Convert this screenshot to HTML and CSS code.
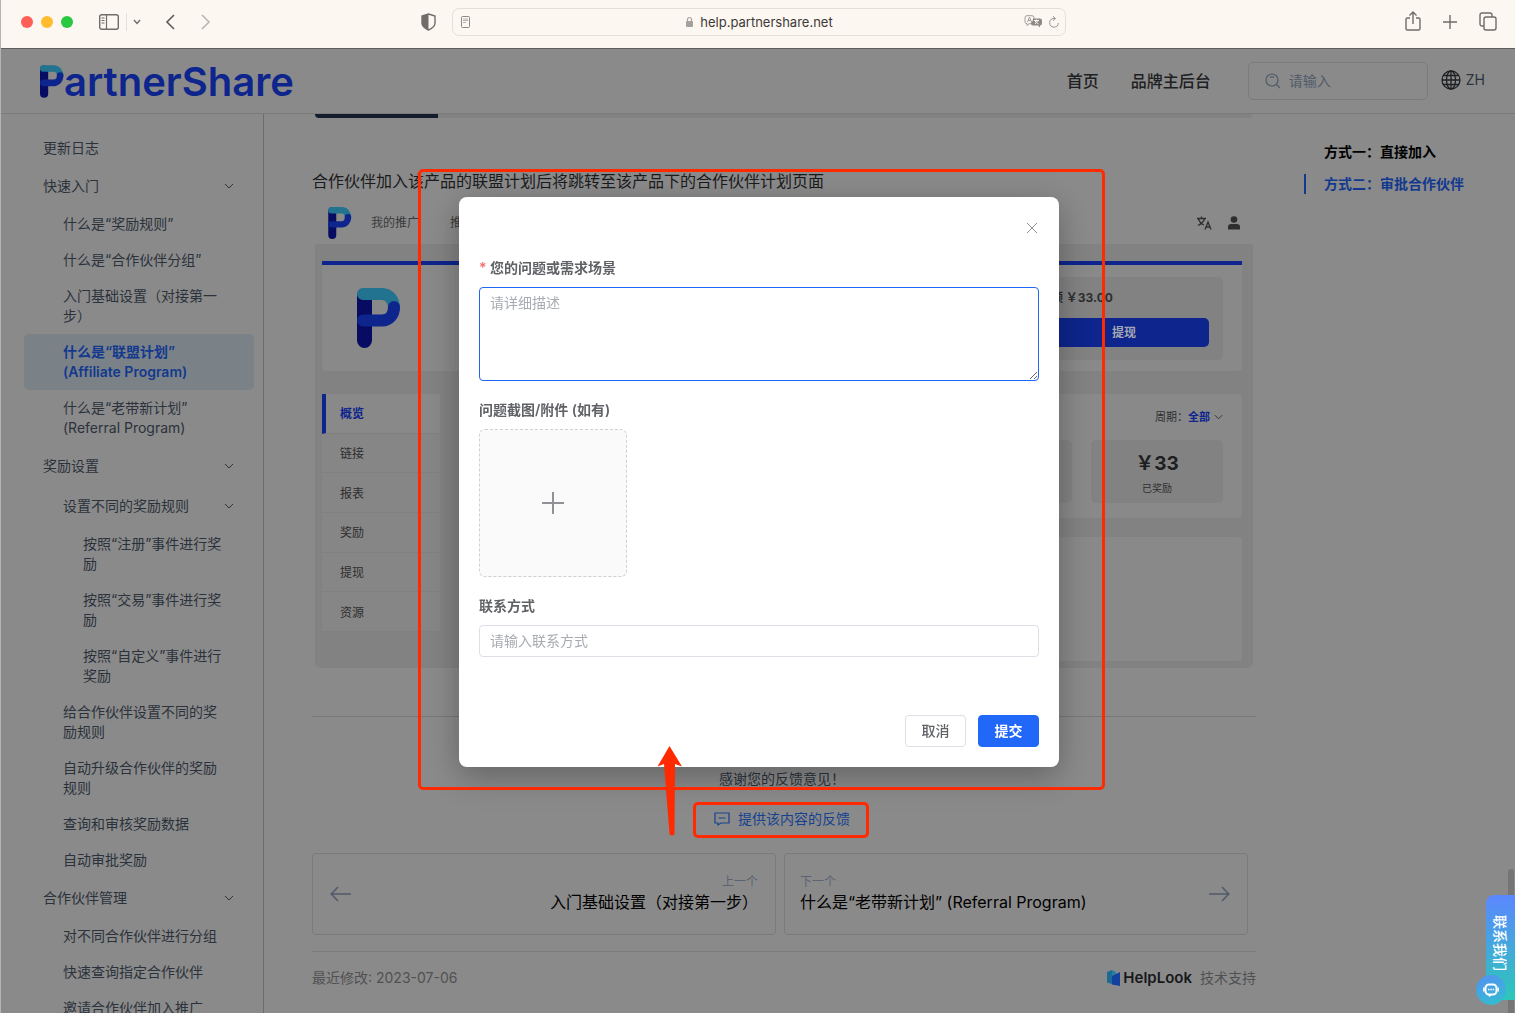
FILE: index.html
```html
<!DOCTYPE html>
<html lang="zh-CN">
<head>
<meta charset="utf-8">
<title>PartnerShare 帮助中心</title>
<link rel="stylesheet" href="styles.css">
</head>
<body>
<svg class="defs" aria-hidden="true">
  <symbol id="p-mark" viewBox="0 0 44 60">
    <path d="M7.500 8V52.500" stroke="#070b62" stroke-width="15" stroke-linecap="round" fill="none"/>
    <path d="M6 6H25C32 6 37 12 37 20" stroke="#22738f" stroke-width="12" stroke-linecap="round" fill="none"/>
    <path d="M6 32.500H25C32 32.500 37 27 37 19" stroke="#0d258c" stroke-width="12" stroke-linecap="round" fill="none"/>
  </symbol>
  <symbol id="chev" viewBox="0 0 10 6"><path d="M1 1l4 4 4-4" fill="none" stroke="currentColor"/></symbol>
</svg>
<div class="window">
  <div class="toolbar">
    <div class="tools tools-left">
      <span class="dots"><i class="dot red"></i><i class="dot amber"></i><i class="dot green"></i></span>
      <svg class="ic-side" width="20" height="16" viewBox="0 0 20 16" fill="none" stroke="#706c68" stroke-width="1.400"><rect x=".7" y=".7" width="18.600" height="14.600" rx="2"/><path d="M7.500 1v14M2.500 4h3M2.500 6.500h3M2.500 9h3" stroke-width="1.200"/></svg>
      <i class="sep"></i>
      <svg width="8" height="6" viewBox="0 0 8 6" fill="none" stroke="#706c68" stroke-width="1.400"><path d="M1 1l3 3.500L7 1"/></svg>
      <svg class="ic-back" width="10" height="16" viewBox="0 0 10 16" fill="none" stroke="#5f5b58" stroke-width="1.600"><path d="M9 1L2 8l7 7"/></svg>
      <svg class="ic-fwd" width="10" height="16" viewBox="0 0 10 16" fill="none" stroke="#b9b5b1" stroke-width="1.600"><path d="M1 1l7 7-7 7"/></svg>
      <svg class="ic-shield" width="15" height="18" viewBox="0 0 15 18"><path d="M7.500 1L14 3v7c0 3-3 5.500-6.500 7C4 15.500 1 13 1 10V3z" fill="none" stroke="#706c68" stroke-width="1.400"/><path d="M7.500 1v16C4 15.500 1 13 1 10V3z" fill="#706c68"/></svg>
    </div>
    <div class="address">
      <svg width="9" height="12" viewBox="0 0 9 12" fill="none" stroke="#8d8985"><rect x=".5" y=".5" width="8" height="11" rx="1"/><path d="M2 3h5M2 4.500h5M2 6.500h3" stroke="#b5b1ad"/></svg>
      <span class="host"><svg width="8" height="10" viewBox="0 0 8 10"><rect x="1" y="4" width="7" height="6" rx="1" fill="#a5a19e"/><path d="M2.500 4V2.500a2 2 0 014 0V4" fill="none" stroke="#a5a19e" stroke-width="1.200"/></svg>help.partnershare.net</span>
      <span class="addr-end">
        <svg width="19" height="13" viewBox="0 0 19 13"><path d="M3 .7h5a2 2 0 012 2v4a2 2 0 01-2 2H5L3 10.500V8.700a2 2 0 01-2-2v-4a2 2 0 012-2z" fill="none" stroke="#a09c98"/><path d="M3.500 7l2-5 2 5M4.200 5.500h2.600" stroke="#a09c98" fill="none"/><path d="M9 3.500h7a2 2 0 012 2v3a2 2 0 01-2 2v2l-2-2H9a2 2 0 01-2-2v-1a4 4 0 002-4z" fill="#8d8985"/><path d="M10 5.500h5M12.500 4.500v1M11 9l3-3.500M11 6l3.500 3" stroke="#fdf7f2" fill="none"/></svg>
        <svg width="10" height="12" viewBox="0 0 10 12" fill="none" stroke="#9a9692"><path d="M6 2.500H5A4.300 4.300 0 109.300 7M4 .3l2.500 2.200L4 4.700"/></svg>
      </span>
    </div>
    <div class="tools tools-right">
      <svg width="16" height="21" viewBox="0 0 16 21" fill="none" stroke="#706c68" stroke-width="1.400"><path d="M5 7H2.500A1.500 1.500 0 001 8.500v9A1.500 1.500 0 002.500 19h11a1.500 1.500 0 001.500-1.500v-9A1.500 1.500 0 0013.500 7H11M8 13V1.500M4.500 4.500L8 1l3.500 3.500"/></svg>
      <svg width="14" height="14" viewBox="0 0 14 14" stroke="#706c68" stroke-width="1.400"><path d="M7 0v14M0 7h14"/></svg>
      <svg width="18" height="19" viewBox="0 0 18 19" fill="none" stroke="#706c68" stroke-width="1.400"><rect x="5" y="5" width="12" height="13" rx="2"/><path d="M5 14H3a2 2 0 01-2-2V3a2 2 0 012-2h8a2 2 0 012 2v2"/></svg>
    </div>
  </div>

  <header class="site-head">
    <a class="brand" href="#"><svg width="24" height="33"><use href="#p-mark"/></svg><span>artnerShare</span></a>
    <nav class="top-nav"><a href="#">首页</a><a href="#">品牌主后台</a></nav>
    <label class="search">
      <svg width="16" height="16" viewBox="0 0 16 16" fill="none" stroke="#515b69" stroke-width="1.200"><circle cx="7" cy="7" r="6"/><path d="M11.500 11.500L15 15M5 4.500a3.500 3.500 0 014 0"/></svg>
      <input type="search" placeholder="请输入" aria-label="搜索">
    </label>
    <button class="lang" type="button"><svg width="20" height="20" viewBox="0 0 20 20" fill="none" stroke="#1e2022" stroke-width="1.300"><circle cx="10" cy="10" r="9"/><ellipse cx="10" cy="10" rx="4.500" ry="9"/><path d="M10 1v18M1 10h18M2.500 5.500h15M2.500 14.500h15"/></svg>ZH</button>
  </header>

  <div class="page">
    <nav class="side">
      <a href="#">更新日志</a>
      <a class="group" href="#">快速入门<svg class="chev"><use href="#chev"/></svg></a>
      <a class="l2" href="#">什么是“奖励规则”</a>
      <a class="l2" href="#">什么是“合作伙伴分组”</a>
      <a class="l2" href="#">入门基础设置（对接第一步）</a>
      <a class="l2 active" href="#">什么是“联盟计划” (Affiliate Program)</a>
      <a class="l2" href="#">什么是“老带新计划” (Referral Program)</a>
      <a class="group" href="#">奖励设置<svg class="chev"><use href="#chev"/></svg></a>
      <a class="l2 group" href="#">设置不同的奖励规则<svg class="chev"><use href="#chev"/></svg></a>
      <a class="l3" href="#">按照“注册”事件进行奖励</a>
      <a class="l3" href="#">按照“交易”事件进行奖励</a>
      <a class="l3" href="#">按照“自定义”事件进行奖励</a>
      <a class="l2" href="#">给合作伙伴设置不同的奖励规则</a>
      <a class="l2" href="#">自动升级合作伙伴的奖励规则</a>
      <a class="l2" href="#">查询和审核奖励数据</a>
      <a class="l2" href="#">自动审批奖励</a>
      <a class="group" href="#">合作伙伴管理<svg class="chev"><use href="#chev"/></svg></a>
      <a class="l2" href="#">对不同合作伙伴进行分组</a>
      <a class="l2" href="#">快速查询指定合作伙伴</a>
      <a class="l2" href="#">邀请合作伙伴加入推广</a>
    </nav>

    <main class="article">
      <div class="prev-shot"><i></i></div>
      <p class="lead">合作伙伴加入该产品的联盟计划后将跳转至该产品下的合作伙伴计划页面</p>

      <div class="shot">
        <div class="shot-head">
          <svg width="24" height="32"><use href="#p-mark"/></svg>
          <span>我的推广</span><span>推广</span>
          <svg class="shot-lang" width="15" height="14" viewBox="0 0 15 14" fill="none" stroke="#2d2e30" stroke-width="1.300"><path d="M0 2.500h9M4.500.5v2M1.500 3c1 3 3 5 5.500 6M7.500 3c-1 3-3.500 5-6.500 6.500M8 13.500l3-7.500 3 7.500M9 11h4"/></svg>
          <svg width="12" height="14" viewBox="0 0 12 14" fill="#2d2e30"><circle cx="6" cy="3.500" r="3.300"/><path d="M0 13.500V11a3 3 0 013-3h6a3 3 0 013 3v2.500z"/></svg>
        </div>
        <div class="shot-body">
          <div class="hero">
            <svg width="44" height="60"><use href="#p-mark"/></svg>
            <div class="balance"><b>余额 ￥33.00</b><span class="withdraw">提现</span></div>
          </div>
          <div class="cols">
            <ul class="menu"><li class="on">概览</li><li>链接</li><li>报表</li><li>奖励</li><li>提现</li><li>资源</li></ul>
            <div class="panels">
              <div class="panel stats">
                <div class="period">周期：<b>全部</b><svg width="9" height="6"><use href="#chev"/></svg></div>
                <div class="tiles"><div class="tile"></div><div class="tile"><b>￥33</b><small>已奖励</small></div></div>
              </div>
              <div class="panel blank"></div>
            </div>
          </div>
        </div>
      </div>

      <section class="feedback">
        <p>感谢您的反馈意见！</p>
        <a href="#"><svg width="16" height="14" viewBox="0 0 16 14" fill="none" stroke="#15428f" stroke-width="1.200"><path d="M1 1h14v10H7l-3 2v-2H1zM4.500 6h7"/></svg>提供该内容的反馈</a>
      </section>

      <div class="pager">
        <a class="prev" href="#"><svg width="21" height="16" viewBox="0 0 21 16" fill="none" stroke="#515b69" stroke-width="1.600"><path d="M21 8H1.500M8 1L1.200 8 8 15"/></svg><span class="pager-text"><small>上一个</small><b>入门基础设置（对接第一步）</b></span></a>
        <a class="next" href="#"><span class="pager-text"><small>下一个</small><b>什么是“老带新计划” (Referral Program)</b></span><svg width="21" height="16" viewBox="0 0 21 16" fill="none" stroke="#515b69" stroke-width="1.600"><path d="M0 8h19.500M13 1l6.800 7-6.800 7"/></svg></a>
      </div>

      <footer class="foot">
        <span>最近修改: 2023-07-06</span>
        <span class="credit"><svg width="13" height="18" viewBox="0 0 13 18"><path d="M0 3l5-2v14l-5-1.500z" fill="#1d6a94"/><path d="M5 1l4 2v7H5z" fill="#28809c"/><path d="M5 7l8-4v14l-8-1.500z" fill="#1440a0"/></svg><b>HelpLook</b>技术支持</span>
      </footer>
    </main>

    <nav class="toc"><a href="#">方式一：直接加入</a><a class="here" href="#">方式二：审批合作伙伴</a></nav>
  </div>
</div>

<i class="scroll"></i>

<div class="overlay">
  <form class="modal" role="dialog" aria-label="反馈">
    <button class="close" type="button" aria-label="关闭"><svg width="10" height="10" viewBox="0 0 10 10" stroke="#8c8f94"><path d="M0 0l10 10M10 0L0 10"/></svg></button>
    <div class="field"><label for="q"><em>*</em> 您的问题或需求场景</label><textarea id="q" placeholder="请详细描述"></textarea></div>
    <div class="field"><label for="up">问题截图/附件 (如有)</label><button class="upload" id="up" type="button"><svg width="22" height="22" viewBox="0 0 22 22" stroke="#8f9197" stroke-width="2"><path d="M11 0v22M0 11h22"/></svg></button></div>
    <div class="field"><label for="ct">联系方式</label><input id="ct" type="text" placeholder="请输入联系方式"></div>
    <div class="actions"><button type="button">取消</button><button class="primary" type="submit">提交</button></div>
  </form>
</div>

<i class="mark mark-dialog"></i>
<i class="mark mark-link"></i>
<svg class="arrow" width="26" height="90" viewBox="0 0 26 90"><path d="M12.500 0L25 20.500l-7-2.500-.5 70q-2.500 3-5 0L7 18l-6.500 2.500z" fill="#ff2a00"/></svg>

<button class="contact" type="button">联系我们</button>
<span class="bubble"><svg width="16" height="14" viewBox="0 0 16 14"><rect x="2.500" y="1.500" width="11" height="10" rx="3.500" fill="none" stroke="#fff" stroke-width="2"/><path d="M.8 4.500v4M15.200 4.500v4" stroke="#fff" stroke-width="1.500"/><path d="M5 12l1.500 2L8.500 12z" fill="#fff"/><path d="M5 6.500h1.500M7.300 6.500h1.500M9.600 6.500h1.500" stroke="#fff" stroke-width="1.500"/></svg></span>
</body>
</html>
```
FILE: styles.css
```css
*{box-sizing:border-box}
body{margin:0;height:100vh;overflow:hidden;background:#8a8a8a;font:14px/20px Inter,"Noto Sans CJK SC",sans-serif;color:#2b323b}
a{color:inherit;text-decoration:none}
button,input,textarea{font:inherit;color:inherit}
p,ul{margin:0;padding:0;list-style:none}
svg{flex:none;display:block;overflow:visible}
.defs{position:absolute;width:0;height:0}
.window{display:flex;flex-direction:column;height:100vh;border-left:1px solid #b4b4b6}

/* browser toolbar */
.toolbar{display:grid;grid-template-columns:1fr 614px 1fr;align-items:center;height:49px;flex:none;padding:0 0 5px 2px;background:#fdf7f2;border-bottom:1px solid #5e5f5c}
.tools{display:flex;align-items:center}
.tools-left{padding-left:18px}
.dots{display:flex;gap:8px;margin-right:26px}
.dot{width:12px;height:12px;border-radius:50%}
.red{background:#fe5f57}
.amber{background:#febc2e}
.green{background:#28c840}
.sep{width:1px;height:18px;background:#e6e0db;margin:0 6px 0 7px}
.ic-back{margin-left:24px}
.ic-fwd{margin-left:26px}
.ic-shield{margin:0 16px 0 auto}
.tools-right{justify-content:flex-end;gap:22px;padding-right:18px}
.address{display:flex;align-items:center;justify-content:space-between;height:28px;border:1px solid #e5dfda;border-radius:7px;padding:0 6px 0 8px;color:#3c3a38;font-size:13px}
.host{display:flex;align-items:center;gap:7px;margin-left:24px}
.addr-end{display:flex;align-items:center;gap:6px}

/* site header */
.site-head{display:flex;align-items:center;height:65px;flex:none;padding:0 30px 0 39px;border-bottom:1px solid #7b7b7b}
.brand{display:flex;align-items:center;margin-right:auto;color:#0d258c}
.brand span{font-size:40px;line-height:40px;font-weight:600;padding-top:2px}
.top-nav{display:flex;gap:32px;font-size:16px;font-weight:500;color:#1e2022}
.search{display:flex;align-items:center;gap:8px;width:180px;height:38px;margin:0 13px 0 37px;padding:0 16px;border:1px solid #7c7c7d;border-radius:5px}
.search input{width:100px;border:0;padding:0;background:none;outline:0}
.search input::placeholder{color:#515b69}
.lang{display:flex;align-items:center;gap:5px;border:0;background:none;padding:0 0 2px}

/* three columns */
.page{display:grid;grid-template-columns:263px minmax(0,1fr) 211px;flex:1;min-height:0;overflow:hidden}
.side{display:flex;flex-direction:column;min-height:0;padding:16px 9px 0 23px;border-right:1px solid #6b6b75;overflow:hidden}
.side a{flex:none;padding:8px 30px 8px 19px;border-radius:5px}
.side .group{display:flex;align-items:center;justify-content:space-between;height:40px;padding-right:20px}
.side .l2{padding-left:39px}
.side .l3{padding-left:59px}
.side .active{background:#7b8287;color:#12398e;font-weight:600}
.chev{width:10px;height:6px}
.article{padding:0 48px 0 48px;min-width:0}
.prev-shot{height:4px;margin:0 3px;background:#828282;border-radius:0 0 5px 5px;overflow:hidden}
.prev-shot i{display:block;width:123px;height:4px;background:#131d2c}
.lead{margin-top:51px;font-size:16px;line-height:24px;color:#1a1b1d}
.toc{padding-top:28px;font-weight:600;color:#000}
.toc a{display:block;line-height:20px;padding-left:18px;border-left:2px solid transparent;margin-bottom:12px}
.toc .here{color:#12398e;border-color:#12398e}

/* product screenshot inside the article */
.shot{margin:7px 3px 0;color:#2d2e30;font-size:12px}
.shot-head{display:flex;align-items:center;height:44px;padding:2px 13px 0;color:#393a3b}
.shot-head span{margin-left:19px}
.shot-head span + span{margin-left:31px}
.shot-lang{margin:0 16px 0 auto}
.shot-body{padding:17px 11px 7px 7px;background:#828282;border-radius:0 0 6px 6px}
.hero{display:flex;justify-content:space-between;align-items:center;height:110px;padding:0 19px 0 35px;background:#898989;border-top:4px solid #0d258c;border-radius:0 0 4px 4px}
.balance{width:220px;height:83px;padding:11px 14px 12px;background:#828282;border-radius:5px;text-align:center}
.balance b{display:block;line-height:20px;padding-right:74px}
.withdraw{display:block;width:170px;margin:10px 0 0 auto;line-height:29px;background:#0d258c;border-radius:5px;color:#a5a9b4;font-weight:700}
.cols{display:flex;gap:19px;margin-top:23px}
.menu{display:flex;flex-direction:column;width:118px;height:238px}
.menu li{display:flex;align-items:center;flex:1;padding:2px 0 0 18px;background:#868686;border-bottom:1px solid #808080}
.menu .on{background:#898989;color:#0d258c;font-weight:700;border-left:4px solid #0d258c;padding-left:14px}
.panels{flex:1;display:flex;flex-direction:column;gap:19px}
.panel{background:#898989;border-radius:4px;height:124px}
.period{display:flex;justify-content:flex-end;align-items:center;height:46px;padding-right:19px;font-size:11px}
.period b{color:#0d258c;margin-right:4px}
.tiles{display:flex;justify-content:flex-end;gap:19px;padding-right:19px}
.tile{display:flex;flex-direction:column;align-items:center;width:132px;height:63px;padding-top:12px;background:#828282;border-radius:5px}
.tile b{font-size:19px;line-height:24px;color:#1e1f20}
.tile small{font-size:10px;line-height:24px}

/* feedback, pager, footer */
.feedback{display:flex;flex-direction:column;align-items:center;margin-top:48px;padding:52px 0 24px;border-top:1px solid #777}
.feedback p{margin-right:4px}
.feedback a{display:flex;align-items:center;gap:8px;margin:20px 4px 0 0;color:#15428f}
.pager{display:grid;grid-template-columns:1fr 1fr;gap:8px;padding-right:8px}
.pager a{display:flex;align-items:center;justify-content:space-between;height:82px;padding:0 17px;border:1px solid #7a7a7b;border-radius:4px}
.pager small{display:block;font-size:12px;line-height:16px;color:#5b6472}
.pager b{display:block;font-size:16px;line-height:24px;font-weight:400;color:#000}
.pager .next{padding-left:15px}
.prev .pager-text{text-align:right}
.foot{display:flex;justify-content:space-between;margin-top:16px;padding-top:16px;border-top:1px solid #7a7a7b;color:#505153}
.credit{display:flex;align-items:center}
.credit b{font:600 15px/20px Inter,sans-serif;color:#17181a;margin:0 8px 0 3px}
.scroll{position:fixed;right:1px;top:869px;bottom:0;width:6px;border-radius:3px 3px 0 0;background:#757575}

/* feedback dialog */
.overlay{position:fixed;inset:49px 0 0 3px;display:flex;justify-content:center;align-items:flex-start;padding-top:148px}
.modal{width:600px;padding:26px 20px 20px;background:#fff;border-radius:8px;box-shadow:0 12px 32px rgba(0,0,0,.18),0 4px 32px rgba(0,0,0,.12);color:#606266}
.close{display:flex;margin:0 2px 25px auto;padding:0;border:0;background:none}
.field{margin-bottom:19px}
.field label{display:block;margin-bottom:9px;font-weight:600}
.field em{color:#f56c6c;font-style:normal}
.field textarea{display:block;width:100%;height:94px;padding:5px 10px;border:1px solid #1e66f5;border-radius:4px;outline:0;background:#fff}
.field input{display:block;width:100%;height:32px;padding:0 10px 2px;border:1px solid #dcdfe6;border-radius:4px;outline:0}
.field ::placeholder{color:#a8abb2}
.upload{display:grid;place-items:center;width:148px;height:148px;padding:0;border:1px dashed #cdd0d6;border-radius:6px;background:#fafafa}
.actions{display:flex;justify-content:flex-end;gap:12px;margin-top:58px}
.actions button{width:61px;height:32px;padding:0;border:1px solid #dcdfe6;border-radius:4px;background:#fff;font-weight:500}
.actions .primary{background:#2268f8;border-color:#2268f8;color:#fff;font-weight:700}

/* red annotations */
.mark{position:absolute;border:3px solid #ff2a00;border-radius:5px}
.mark-dialog{left:418px;top:169px;width:687px;height:621px}
.mark-link{left:693px;top:802px;width:176px;height:36px}
.arrow{position:absolute;left:657px;top:746px}

/* contact tab */
.contact{position:fixed;right:0;bottom:13px;width:29px;height:105px;padding:0 0 10px;border:0;border-radius:8px 0 0 0;background:linear-gradient(#5b87ff,#2cc8b8);color:#fff;font-weight:500;writing-mode:vertical-rl;text-orientation:sideways;line-height:29px}
.bubble{position:fixed;right:9px;bottom:8px;display:grid;place-items:center;width:30px;height:30px;border-radius:50%;background:linear-gradient(160deg,#5590f5,#2fc0cc)}
```
